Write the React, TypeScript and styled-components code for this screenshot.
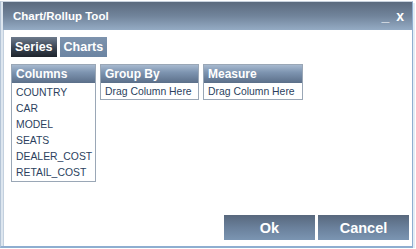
import React, { useState } from 'react'
import styled, { createGlobalStyle } from 'styled-components'

const GlobalStyle = createGlobalStyle`
    html, body {
        margin: 0;
        padding: 0;
        background: #ffffff;
        font-family: "Liberation Sans", Arial, sans-serif;
    }
`

const StyledWindow = styled.div`
    width: 409px;
    height: 244px;
    margin-top: 1px;
    border-left: 1px solid #b4c4d6;
    border-top: 1px solid #c8d2de;
    border-right: 1px solid #8eaed0;
    border-bottom: 2px solid #8eaed0;
    padding-left: 2px;
    background: #dde6ef;
    display: flex;
    flex-direction: column;
    box-shadow: 2px 2px 0 #e4ecf4;
`

const StyledTitleBar = styled.div`
    height: 28px;
    flex-shrink: 0;
    display: flex;
    align-items: center;
    justify-content: space-between;
    padding: 0 8px 0 10px;
    background: linear-gradient(to bottom, #5b6a7e 0%, #71849b 50%, #94abc4 100%);
    color: #ffffff;
    font-weight: bold;
    font-size: 11.5px;
`

const StyledTitleControls = styled.div`
    display: flex;
    align-items: flex-end;
    gap: 7px;
    font-size: 14px;
`

const StyledBody = styled.div`
    flex: 1;
    background: #ffffff;
    border-left: 1px solid #c3d0de;
    padding: 7px 3px 6px 7px;
    display: flex;
    flex-direction: column;
`

const StyledTabs = styled.div`
    display: flex;
    gap: 3px;
`

const StyledTab = styled.button<{ $active?: boolean }>`
    height: 20px;
    padding: 0 4px;
    border: none;
    cursor: pointer;
    color: #ffffff;
    font-family: "Liberation Sans", Arial, sans-serif;
    font-weight: bold;
    font-size: 12.5px;
    background: ${p => p.$active
        ? 'linear-gradient(to bottom, #6d7a8c 0%, #3a4452 55%, #1e242c 100%)'
        : 'linear-gradient(to bottom, #7d93ad 0%, #6b84a2 100%)'};
`

const StyledPanels = styled.div`
    display: flex;
    align-items: flex-start;
    gap: 4px;
    margin-top: 7px;
    flex: 1;
`

const StyledPanel = styled.div<{ $width: number }>`
    width: ${p => p.$width}px;
    border: 1px solid #9aa7b6;
    background: #ffffff;
`

const StyledPanelHeader = styled.div`
    height: 18px;
    padding-left: 4px;
    display: flex;
    align-items: center;
    color: #ffffff;
    font-weight: bold;
    font-size: 12px;
    background: linear-gradient(to bottom, #a7b9cf 0%, #7e95b1 40%, #5b6f89 100%);
`

const StyledList = styled.div<{ $pad: number }>`
    padding: ${p => p.$pad}px 0;
`

const StyledItem = styled.div`
    height: 16px;
    padding-left: 4px;
    display: flex;
    align-items: center;
    font-size: 10.4px;
    color: #2c3f5e;
    white-space: nowrap;
`

const StyledFooter = styled.div`
    display: flex;
    justify-content: flex-end;
    gap: 3px;
`

const StyledButton = styled.button`
    width: 91px;
    height: 25px;
    border: none;
    cursor: pointer;
    color: #ffffff;
    font-family: "Liberation Sans", Arial, sans-serif;
    font-weight: bold;
    font-size: 14.5px;
    background: linear-gradient(to bottom, #58687d 0%, #6a809b 50%, #7b95b2 100%);
`

const columns = ['COUNTRY', 'CAR', 'MODEL', 'SEATS', 'DEALER_COST', 'RETAIL_COST']

const App = () => {
    const [tab, setTab] = useState<string>('Series')

    return (
        <>
            <GlobalStyle />
            <StyledWindow>
                <StyledTitleBar>
                    <span>Chart/Rollup Tool</span>
                    <StyledTitleControls>
                        <span>_</span>
                        <span>x</span>
                    </StyledTitleControls>
                </StyledTitleBar>
                <StyledBody>
                    <StyledTabs>
                        {['Series', 'Charts'].map(name => (
                            <StyledTab key={name} $active={tab === name} onClick={() => setTab(name)}>
                                {name}
                            </StyledTab>
                        ))}
                    </StyledTabs>
                    <StyledPanels>
                        <StyledPanel $width={83}>
                            <StyledPanelHeader>Columns</StyledPanelHeader>
                            <StyledList $pad={1}>
                                {columns.map(column => <StyledItem key={column}>{column}</StyledItem>)}
                            </StyledList>
                        </StyledPanel>
                        <StyledPanel $width={97}>
                            <StyledPanelHeader>Group By</StyledPanelHeader>
                            <StyledList $pad={0}>
                                <StyledItem>Drag Column Here</StyledItem>
                            </StyledList>
                        </StyledPanel>
                        <StyledPanel $width={98}>
                            <StyledPanelHeader>Measure</StyledPanelHeader>
                            <StyledList $pad={0}>
                                <StyledItem>Drag Column Here</StyledItem>
                            </StyledList>
                        </StyledPanel>
                    </StyledPanels>
                    <StyledFooter>
                        <StyledButton>Ok</StyledButton>
                        <StyledButton>Cancel</StyledButton>
                    </StyledFooter>
                </StyledBody>
            </StyledWindow>
        </>
    )
}

export default App
